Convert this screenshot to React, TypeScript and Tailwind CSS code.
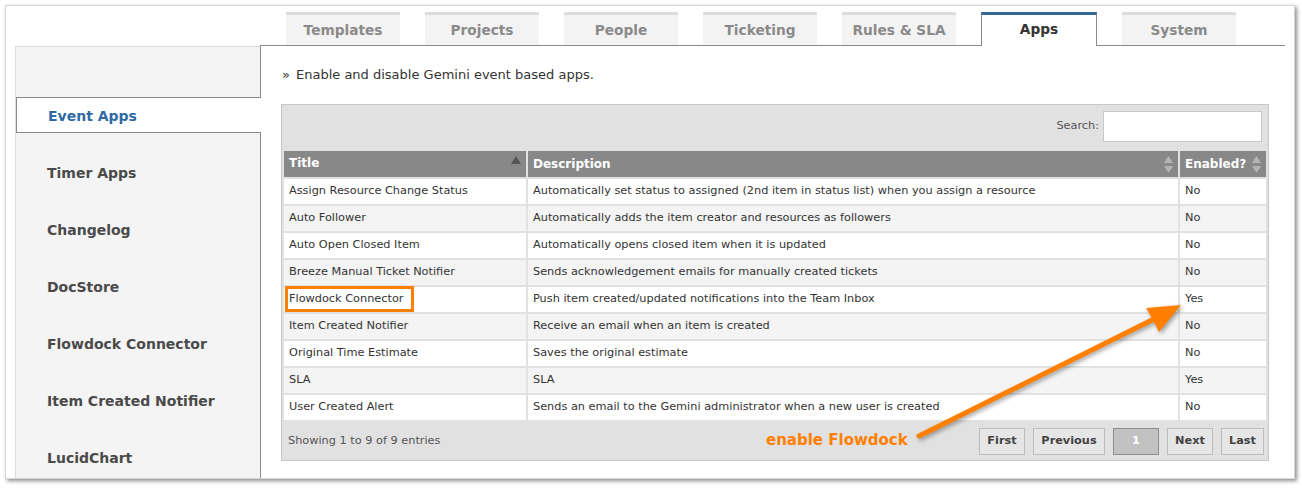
import React from "react";

const tabs = ["Templates", "Projects", "People", "Ticketing", "Rules & SLA", "Apps", "System"];

const sideItems = [
  "Event Apps",
  "Timer Apps",
  "Changelog",
  "DocStore",
  "Flowdock Connector",
  "Item Created Notifier",
  "LucidChart",
];

const rows = [
  ["Assign Resource Change Status", "Automatically set status to assigned (2nd item in status list) when you assign a resource", "No"],
  ["Auto Follower", "Automatically adds the item creator and resources as followers", "No"],
  ["Auto Open Closed Item", "Automatically opens closed item when it is updated", "No"],
  ["Breeze Manual Ticket Notifier", "Sends acknowledgement emails for manually created tickets", "No"],
  ["Flowdock Connector", "Push item created/updated notifications into the Team Inbox", "Yes"],
  ["Item Created Notifier", "Receive an email when an item is created", "No"],
  ["Original Time Estimate", "Saves the original estimate", "No"],
  ["SLA", "SLA", "Yes"],
  ["User Created Alert", "Sends an email to the Gemini administrator when a new user is created", "No"],
];

const font = "font-['DejaVu_Sans',Verdana,sans-serif]";

function SortBoth() {
  return (
    <svg width="9" height="17" viewBox="0 0 9 17" className="shrink-0">
      <polygon points="4.5,0 9,7 0,7" fill="#b4b4b4" />
      <polygon points="0,10 9,10 4.5,17" fill="#b4b4b4" />
    </svg>
  );
}

function SortUp() {
  return (
    <svg width="10" height="8" viewBox="0 0 10 8" className="shrink-0 mb-[8px]">
      <polygon points="5,0 10,8 0,8" fill="#555" />
    </svg>
  );
}

function PageButton({ label, w, active }: { label: string; w: string; active?: boolean }) {
  return (
    <div
      className={`${w} h-[27px] flex items-center justify-center text-[11.3px] font-bold border ${
        active ? "bg-[#c2c2c2] border-[#8c8c8c] text-white" : "bg-[#e6e6e6] border-[#bdbdbd] text-[#444]"
      }`}
    >
      {label}
    </div>
  );
}

export default function App() {
  return (
    <div className={`relative w-[1302px] h-[488px] bg-white ${font}`}>
      <div className="absolute left-[5px] top-[5px] w-[1290px] h-[474px] border border-[#d6d6d6] bg-white shadow-[2px_2px_4px_rgba(0,0,0,0.45)] flex flex-col">
        {/* tab bar */}
        <div className="flex h-[40px]">
          <div className="w-[254px]" />
          <div className="w-[1025px] border-b border-[#8a8a8a] flex items-end pl-[26px] gap-[25px]">
            {tabs.map((t) =>
              t === "Apps" ? (
                <div
                  key={t}
                  className="relative z-10 -mb-px w-[116px] h-[34px] bg-white border-t-[3px] border-t-[#35669a] border-x border-x-[#8a8a8a] flex items-center justify-center pb-[2px] text-[13.7px] font-bold text-[#333]"
                >
                  {t}
                </div>
              ) : (
                <div
                  key={t}
                  className="w-[114px] h-[33px] bg-[#f3f3f3] border-t-[3px] border-t-[#dcdcdc] flex items-center justify-center pt-[1px] text-[13.7px] font-bold text-[#8a8a8a]"
                >
                  {t}
                </div>
              )
            )}
          </div>
        </div>

        {/* body */}
        <div className="flex flex-1">
          <div className="ml-[9px] w-[245px] bg-[#f4f4f4] border-l border-t border-[#dcdcdc] flex flex-col gap-[22px] pt-[50px]">
            {sideItems.map((s, i) =>
              i === 0 ? (
                <div
                  key={s}
                  className="relative z-10 -mr-px h-[36px] bg-white border-y border-l border-[#8a8a8a] flex items-center pl-[31px] pt-[3px] text-[14px] font-bold text-[#2f6aa6]"
                >
                  {s}
                </div>
              ) : (
                <div key={s} className="h-[35px] flex items-center pl-[31px] pt-[2px] text-[14px] font-bold text-[#4a4a4a]">
                  {s}
                </div>
              )
            )}
          </div>

          <div className="w-[1025px] border-l border-[#8a8a8a] pl-[20px] pr-[16px] pt-[21px]">
            <div className="ml-[1px] h-[16px] flex items-center text-[13px] text-[#333]">
              <span className="mr-[6px]">»</span>Enable and disable Gemini event based apps.
            </div>

            <div className="mt-[21px] w-[988px] border border-[#c8c8c8] bg-[#e1e1e1]">
              <div className="flex justify-end items-center pt-[6px] pr-[6px] gap-[4px]">
                <span className="text-[11.3px] text-[#555]">Search:</span>
                <div className="w-[159px] h-[31px] bg-white border border-[#c8c8c8]" />
              </div>

              <div className="mt-[9px] mx-[2px] grid grid-cols-[242px_650px_86px] gap-[2px]">
                <div className="h-[26px] bg-[#888] flex items-end justify-between pl-[5px] pr-[5px] pb-[5px] text-[12px] font-bold text-white">
                  <span>Title</span>
                  <SortUp />
                </div>
                <div className="h-[26px] bg-[#888] flex items-center justify-between pl-[5px] pr-[5px] text-[12px] font-bold text-white">
                  <span>Description</span>
                  <SortBoth />
                </div>
                <div className="h-[26px] bg-[#888] flex items-center justify-between pl-[5px] pr-[5px] text-[12px] font-bold text-white">
                  <span>Enabled?</span>
                  <SortBoth />
                </div>
                {rows.map((r, i) =>
                  r.map((c, j) => (
                    <div
                      key={`${i}-${j}`}
                      className={`h-[25px] flex items-center pl-[5px] text-[11.3px] text-[#333] whitespace-nowrap ${
                        i % 2 === 0 ? "bg-white" : "bg-[#f4f4f4]"
                      }`}
                    >
                      {c}
                    </div>
                  ))
                )}
              </div>

              <div className="flex items-center justify-between pl-[6px] pr-[4px] pt-[8px] pb-[5px]">
                <span className="text-[11.3px] text-[#555]">Showing 1 to 9 of 9 entries</span>
                <div className="flex gap-[8px]">
                  <PageButton label="First" w="w-[46px]" />
                  <PageButton label="Previous" w="w-[72px]" />
                  <PageButton label="1" w="w-[46px]" active />
                  <PageButton label="Next" w="w-[46px]" />
                  <PageButton label="Last" w="w-[43px]" />
                </div>
              </div>
            </div>
          </div>
        </div>
      </div>

      {/* annotations */}
      <div className="absolute left-[285px] top-[286px] w-[129px] h-[26px] border-[3px] border-[#ff8000]" />
      <div className="absolute left-[766px] top-[429px] text-[15px] font-bold text-[#ff8000]">enable Flowdock</div>
      <svg
        className="absolute left-0 top-0 pointer-events-none drop-shadow-[2px_2px_2px_rgba(0,0,0,0.35)]"
        width="1302"
        height="488"
        viewBox="0 0 1302 488"
      >
        <line x1="919" y1="436" x2="1156" y2="318" stroke="#ff8000" strokeWidth="5" strokeLinecap="round" />
        <polygon points="1181,305 1159,332 1153,320 1146,308" fill="#ff8000" />
      </svg>
    </div>
  );
}
